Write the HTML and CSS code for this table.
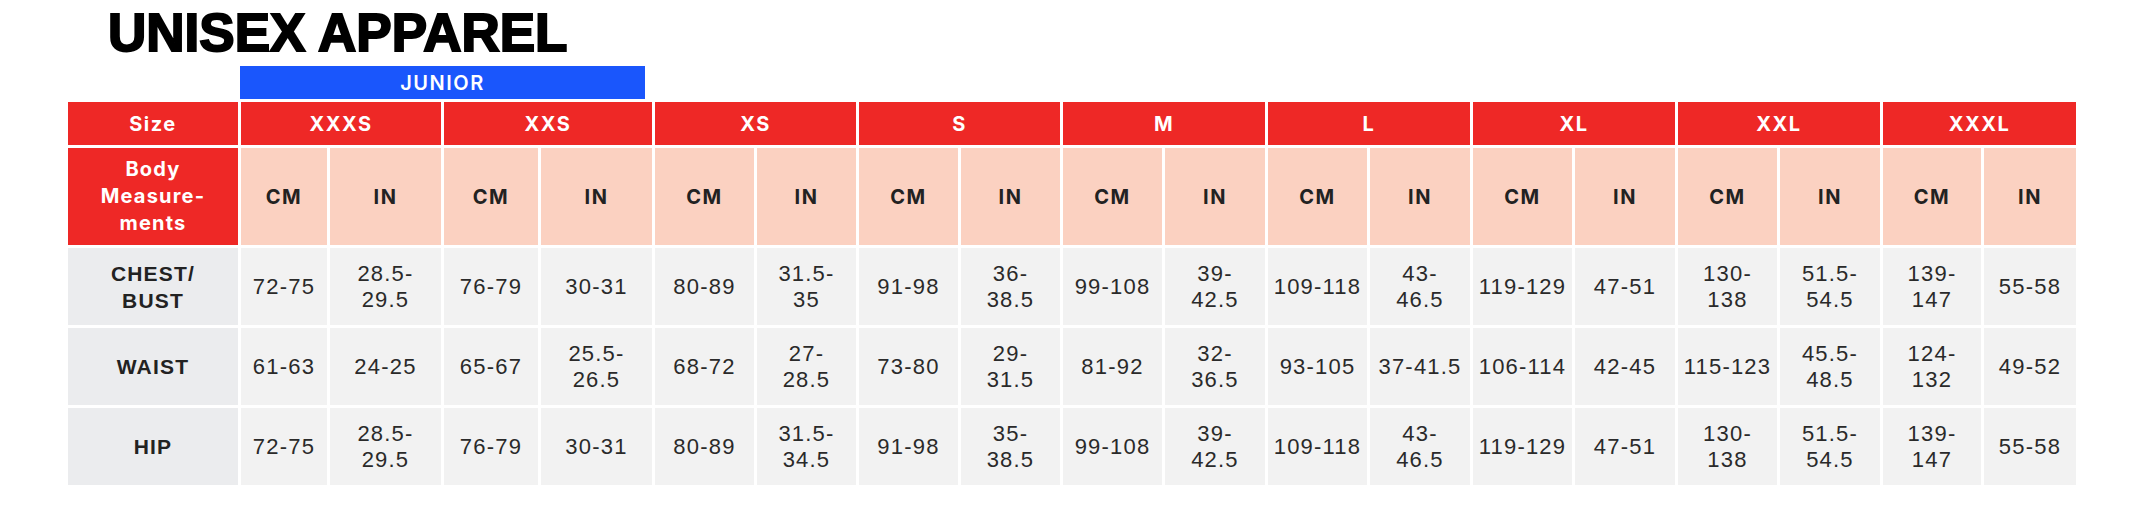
FILE: index.html
```html
<!DOCTYPE html>
<html lang="en">
<head>
<meta charset="utf-8">
<title>Unisex Apparel Size Chart</title>
<link rel="stylesheet" href="styles.css">
</head>
<body>
<div class="page">
  <h1 class="title">UNISEX APPAREL</h1>
  <div class="junior">JUNIOR</div>
  <div class="chart">
    <div class="cell red">Size</div>
    <div class="cell red span2">XXXS</div>
    <div class="cell red span2">XXS</div>
    <div class="cell red span2">XS</div>
    <div class="cell red span2">S</div>
    <div class="cell red span2">M</div>
    <div class="cell red span2">L</div>
    <div class="cell red span2">XL</div>
    <div class="cell red span2">XXL</div>
    <div class="cell red span2">XXXL</div>

    <div class="cell red multi">Body<br>Measure-<br>ments</div>
    <div class="cell unit">CM</div><div class="cell unit">IN</div>
    <div class="cell unit">CM</div><div class="cell unit">IN</div>
    <div class="cell unit">CM</div><div class="cell unit">IN</div>
    <div class="cell unit">CM</div><div class="cell unit">IN</div>
    <div class="cell unit">CM</div><div class="cell unit">IN</div>
    <div class="cell unit">CM</div><div class="cell unit">IN</div>
    <div class="cell unit">CM</div><div class="cell unit">IN</div>
    <div class="cell unit">CM</div><div class="cell unit">IN</div>
    <div class="cell unit">CM</div><div class="cell unit">IN</div>

    <div class="cell label">CHEST/<br>BUST</div>
    <div class="cell val">72-75</div><div class="cell val">28.5-<br>29.5</div>
    <div class="cell val">76-79</div><div class="cell val">30-31</div>
    <div class="cell val">80-89</div><div class="cell val">31.5-<br>35</div>
    <div class="cell val">91-98</div><div class="cell val">36-<br>38.5</div>
    <div class="cell val">99-108</div><div class="cell val">39-<br>42.5</div>
    <div class="cell val">109-118</div><div class="cell val">43-<br>46.5</div>
    <div class="cell val">119-129</div><div class="cell val">47-51</div>
    <div class="cell val">130-<br>138</div><div class="cell val">51.5-<br>54.5</div>
    <div class="cell val">139-<br>147</div><div class="cell val">55-58</div>

    <div class="cell label">WAIST</div>
    <div class="cell val">61-63</div><div class="cell val">24-25</div>
    <div class="cell val">65-67</div><div class="cell val">25.5-<br>26.5</div>
    <div class="cell val">68-72</div><div class="cell val">27-<br>28.5</div>
    <div class="cell val">73-80</div><div class="cell val">29-<br>31.5</div>
    <div class="cell val">81-92</div><div class="cell val">32-<br>36.5</div>
    <div class="cell val">93-105</div><div class="cell val">37-41.5</div>
    <div class="cell val">106-114</div><div class="cell val">42-45</div>
    <div class="cell val">115-123</div><div class="cell val">45.5-<br>48.5</div>
    <div class="cell val">124-<br>132</div><div class="cell val">49-52</div>

    <div class="cell label">HIP</div>
    <div class="cell val">72-75</div><div class="cell val">28.5-<br>29.5</div>
    <div class="cell val">76-79</div><div class="cell val">30-31</div>
    <div class="cell val">80-89</div><div class="cell val">31.5-<br>34.5</div>
    <div class="cell val">91-98</div><div class="cell val">35-<br>38.5</div>
    <div class="cell val">99-108</div><div class="cell val">39-<br>42.5</div>
    <div class="cell val">109-118</div><div class="cell val">43-<br>46.5</div>
    <div class="cell val">119-129</div><div class="cell val">47-51</div>
    <div class="cell val">130-<br>138</div><div class="cell val">51.5-<br>54.5</div>
    <div class="cell val">139-<br>147</div><div class="cell val">55-58</div>
  </div>
</div>
</body>
</html>
```
FILE: styles.css
```css
html, body {
  margin: 0;
  padding: 0;
  background: #ffffff;
}

.page {
  padding: 7px 0 0 68px;
}

.title {
  margin: 0 0 7px 40px;
  font-family: "Liberation Sans", Arial, sans-serif;
  font-weight: 700;
  font-size: 53px;
  line-height: 52px;
  height: 52px;
  color: #000;
  -webkit-text-stroke: 2px #000;
}

.junior {
  margin: 0 0 3px 172px;
  width: 405px;
  height: 33px;
  background: #1a56fc;
  color: #ffffff;
  font-family: Inter, "DejaVu Sans", sans-serif;
  font-weight: 600;
  font-size: 20px;
  letter-spacing: 1.5px;
  display: flex;
  align-items: center;
  justify-content: center;
}

.chart {
  display: grid;
  grid-template-columns:
    170px
    86px 111px
    94px 111px
    99px 99px
    99px 99px
    99px 100px
    99px 100px
    99px 100px
    99px 100px
    98px 92px;
  grid-template-rows: 43px 97px 77px 77px 77px;
  gap: 3px;
  width: max-content;
}

.cell {
  display: flex;
  align-items: center;
  justify-content: center;
  text-align: center;
}

.span2 {
  grid-column: span 2;
}

.red {
  background: #ee2826;
  color: #ffffff;
  font-family: Inter, "DejaVu Sans", sans-serif;
  font-weight: 700;
  font-size: 20px;
  letter-spacing: 1.5px;
}

.multi {
  line-height: 27px;
  letter-spacing: 1.2px;
}

.unit {
  background: #fbd1c1;
  color: #222222;
  font-family: Inter, "DejaVu Sans", sans-serif;
  font-weight: 700;
  font-size: 20px;
  letter-spacing: 1.5px;
}

.label {
  background: #ebecee;
  color: #222222;
  font-family: "Liberation Sans", Arial, sans-serif;
  font-weight: 700;
  font-size: 21px;
  line-height: 27px;
  letter-spacing: 1.2px;
}

.val {
  background: #f2f2f2;
  color: #2a2a2a;
  font-family: "Liberation Sans", Arial, sans-serif;
  font-weight: 400;
  font-size: 22px;
  line-height: 26px;
  letter-spacing: 1.2px;
  white-space: nowrap;
}
```
